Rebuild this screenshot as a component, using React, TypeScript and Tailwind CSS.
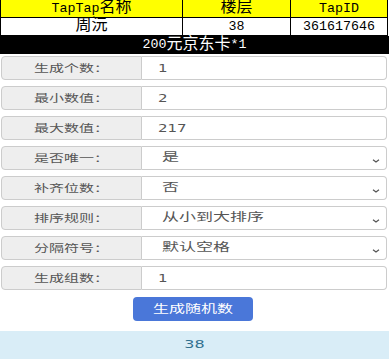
import React from "react";

const mono = { fontFamily: '"Liberation Mono", "Noto Sans CJK SC", monospace' };
const sans = { fontFamily: '"DejaVu Sans", "Noto Sans CJK SC", sans-serif' };

const Cjk = ({ children }: { children: React.ReactNode }) => (
  <span className="text-[16px]">{children}</span>
);

type Row = { label: string; value: string; select?: boolean };

const rows: Row[] = [
  { label: "生成个数：", value: "1" },
  { label: "最小数值：", value: "2" },
  { label: "最大数值：", value: "217" },
  { label: "是否唯一：", value: "是", select: true },
  { label: "补齐位数：", value: "否", select: true },
  { label: "排序规则：", value: "从小到大排序", select: true },
  { label: "分隔符号：", value: "默认空格", select: true },
  { label: "生成组数：", value: "1" },
];

function Field({ row }: { row: Row }) {
  return (
    <div className="flex h-[24px] w-full">
      <div className="flex w-[141px] shrink-0 items-center justify-center rounded-l-[4px] border border-[#cccccc] bg-[#eeeeee] text-[15px] text-[#555555]">
        <span className="inline-block scale-y-[0.7]">{row.label}</span>
      </div>
      <div className="relative flex flex-1 items-center rounded-r-[4px] border border-l-0 border-[#cccccc] bg-white text-[#555555]">
        {row.select ? (
          <>
            <span className="ml-[20px] inline-block scale-y-[0.7] text-[17px]">{row.value}</span>
            <svg className="absolute right-[6px] top-[12px]" width="8" height="4" viewBox="0 0 8 4">
              <polyline points="1,0.8 4,3 7,0.8" fill="none" stroke="#555" strokeWidth="1.2" />
            </svg>
          </>
        ) : (
          <span className="ml-[16px] inline-block scale-y-[0.7] text-[15px]">{row.value}</span>
        )}
      </div>
    </div>
  );
}

export default function App() {
  return (
    <div className="w-[389px] bg-white">
      {/* winner table */}
      <table className="w-[388px] table-fixed border-collapse text-[13.3px] text-black" style={mono}>
        <colgroup>
          <col className="w-[182px]" />
          <col className="w-[108px]" />
          <col />
        </colgroup>
        <tbody>
          <tr className="h-[17px] bg-[#ffff00]">
            <td className="border border-t-0 border-black p-0 text-center leading-[16px]">
              TapTap<Cjk>名称</Cjk>
            </td>
            <td className="border border-t-0 border-black p-0 text-center leading-[16px]">
              <Cjk>楼层</Cjk>
            </td>
            <td className="border border-t-0 border-black p-0 text-center leading-[16px]">TapID</td>
          </tr>
          <tr className="h-[17px] bg-white">
            <td className="border border-black p-0 text-center leading-[16px]">
              <Cjk>周沅</Cjk>
            </td>
            <td className="border border-black p-0 text-center leading-[16px]">38</td>
            <td className="border border-black p-0 text-center leading-[16px]">361617646</td>
          </tr>
        </tbody>
      </table>
      <div className="flex h-[18px] items-center justify-center bg-black text-[13.3px] text-white" style={mono}>
        200<Cjk>元京东卡</Cjk>*1
      </div>

      {/* form */}
      <div className="mt-[2px] flex flex-col gap-[6px] pl-[1px] pr-[2px]" style={sans}>
        {rows.map((r) => (
          <Field key={r.label} row={r} />
        ))}
      </div>

      <div className="mt-[7px] flex justify-center pr-[3px]" style={sans}>
        <button className="flex h-[24px] w-[120px] items-center justify-center rounded-[4px] bg-[#4a77d9] text-[16px] text-white">
          <span className="inline-block scale-y-[0.7]">生成随机数</span>
        </button>
      </div>

      <div
        className="mt-[10px] flex h-[28px] items-center justify-center bg-[#d9edf7] text-[16px] text-[#31708f]"
        style={sans}
      >
        <span className="inline-block scale-y-[0.6]">38</span>
      </div>

      <table className="mt-[1px] w-[388px] table-fixed border-collapse">
        <colgroup>
          <col className="w-[182px]" />
          <col className="w-[108px]" />
          <col />
        </colgroup>
        <tbody>
          <tr className="h-[17px]">
            <td className="border border-black p-0" />
            <td className="border border-black p-0" />
            <td className="border border-black p-0" />
          </tr>
        </tbody>
      </table>
    </div>
  );
}
